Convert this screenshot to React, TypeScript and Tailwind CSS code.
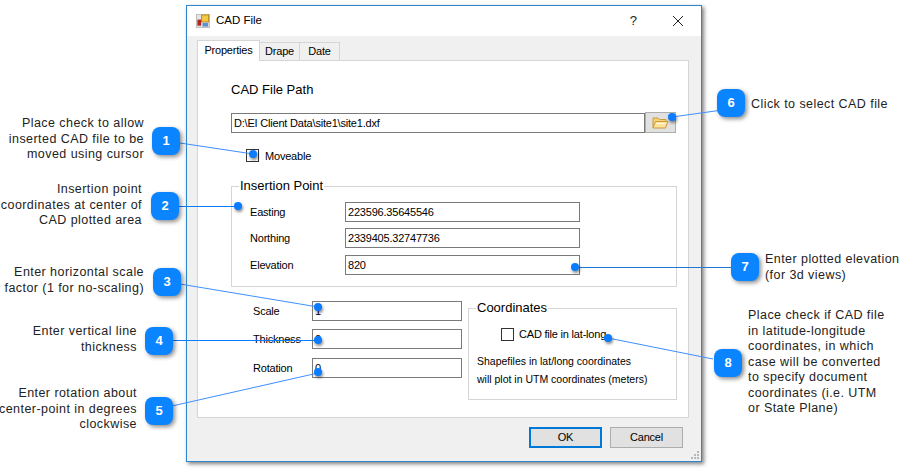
import React from "react";

const Field = ({ value, className = "" }: { value: string; className?: string }) => (
  <div className={`h-[20px] border border-[#7a7a7a] bg-white pl-[2px] text-[11px] leading-[18px] tracking-[-0.2px] text-black ${className}`}>
    {value}
  </div>
);

const Row = ({ label, value, labelWidth, inputWidth, className = "" }: { label: string; value: string; labelWidth: string; inputWidth: string; className?: string }) => (
  <div className={`flex items-center ${className}`}>
    <span className={`text-[11px] tracking-[-0.2px] text-black ${labelWidth}`}>{label}</span>
    <Field value={value} className={inputWidth} />
  </div>
);

const Badge = ({ n, className }: { n: number; className: string }) => (
  <div className={`absolute flex h-[28px] w-[28px] items-center justify-center rounded-[8px] bg-[#0a84ff] text-[13px] font-bold text-white shadow-[2px_2px_4px_rgba(0,0,0,0.45)] ${className}`}>
    {n}
  </div>
);

const Note = ({ className, children }: { className: string; children: React.ReactNode }) => (
  <div className={`absolute whitespace-nowrap text-[12.5px] leading-[15.5px] tracking-[0.44px] text-[#222] ${className}`}>{children}</div>
);

const Dot = ({ className }: { className: string }) => (
  <div className={`absolute h-[8px] w-[8px] rounded-full bg-[#0a7cff] shadow-[1px_2px_3px_rgba(0,0,0,0.45)] ${className}`} />
);

export default function App() {
  return (
    <div className="relative h-[470px] w-[899px] overflow-hidden bg-white font-['Liberation_Sans',sans-serif]">
      {/* dialog */}
      <div className="absolute left-[186px] top-[5px] flex h-[457px] w-[516px] flex-col border border-[#2a86cf] bg-[#f0f0f0] shadow-[2px_2px_4px_rgba(0,0,0,0.5)]">
        <div className="flex h-[30px] items-center bg-white pl-[9px]">
          <svg width="14" height="14" viewBox="0 0 15 15">
            <rect x="0.5" y="0.5" width="14" height="14" fill="#e4e4e4" stroke="#bdbdbd" />
            <rect x="6" y="1" width="7.5" height="7.5" fill="#f4c842" stroke="#b98a1c" />
            <rect x="1.5" y="6" width="4" height="6.5" fill="#b3261e" />
            <rect x="7" y="9.5" width="6" height="4" fill="#5b8fd6" />
          </svg>
          <span className="ml-[6px] text-[11.5px] text-black">CAD File</span>
          <span className="ml-auto mr-[35px] text-[13px] text-[#222]">?</span>
          <svg width="12" height="12" viewBox="0 0 12 12" className="mr-[17px]">
            <path d="M1 1 L11 11 M11 1 L1 11" stroke="#222" strokeWidth="1" fill="none" />
          </svg>
        </div>

        <div className="flex flex-col pl-[10px] pt-[4px]">
          {/* tabs */}
          <div className="flex h-[20px] items-end text-[11px] tracking-[-0.2px] text-black">
            <div className="z-10 -mb-px flex h-[21px] w-[63px] items-start justify-center border border-b-0 border-[#d5d5d5] bg-white pt-[1px]">Properties</div>
            <div className="flex h-[18px] w-[40px] items-center justify-center border-r border-t border-[#d5d5d5] bg-[#f0f0f0]">Drape</div>
            <div className="flex h-[18px] w-[40px] items-center justify-center border-r border-t border-[#d5d5d5] bg-[#f0f0f0]">Date</div>
          </div>

          {/* panel */}
          <div className="flex h-[358px] w-[492px] flex-col border border-[#d5d5d5] bg-white pl-[33px]">
            <div className="mt-[21px] h-[16px] text-[13px] leading-[16px] text-black">CAD File Path</div>
            <div className="mt-[14px] flex h-[21px] items-center">
              <Field value={"D:\\EI Client Data\\site1\\site1.dxf"} className="w-[414px]" />
              <div className="flex h-[21px] w-[31px] items-center justify-center border border-[#adadad] bg-[#e1e1e1]">
                <svg width="17" height="13" viewBox="0 0 17 13">
                  <path d="M1 12 V2 H6 L7.5 3.5 H14 V5.5" fill="#f6d27a" stroke="#c99a3a" />
                  <path d="M1 12 L3.5 5.5 H16 L13.5 12 Z" fill="#fbe39e" stroke="#c99a3a" />
                  <path d="M4.5 7.5 H13" stroke="#fff6d8" />
                </svg>
              </div>
            </div>
            <div className="mt-[15px] flex h-[15px] items-center pl-[15px]">
              <div className="h-[13px] w-[13px] border border-[#333] bg-white" />
              <span className="ml-[6px] mt-[2px] text-[11px] tracking-[-0.2px] text-black">Moveable</span>
            </div>

            {/* insertion point group */}
            <div className="relative mt-[23px] flex h-[101px] w-[446px] flex-col border border-[#d5d5d5] pl-[18px] pt-[15px]">
              <span className="absolute -top-[9px] left-[7px] bg-white px-[1px] text-[13px] leading-[16px] text-black">Insertion Point</span>
              <Row label="Easting" value="223596.35645546" labelWidth="w-[95px]" inputWidth="w-[235px]" />
              <Row label="Northing" value="2339405.32747736" labelWidth="w-[95px]" inputWidth="w-[235px]" className="mt-[6px]" />
              <Row label="Elevation" value="820" labelWidth="w-[95px]" inputWidth="w-[235px]" className="mt-[7px]" />
            </div>

            <div className="mt-[14px] flex items-start">
              <div className="flex w-[231px] flex-col pl-[22px]">
                <Row label="Scale" value="1" labelWidth="w-[59px]" inputWidth="w-[150px]" />
                <Row label="Thickness" value="0" labelWidth="w-[59px]" inputWidth="w-[150px]" className="mt-[8px]" />
                <Row label="Rotation" value="0" labelWidth="w-[59px]" inputWidth="w-[150px]" className="mt-[9px]" />
              </div>
              <div className="relative ml-[6px] mt-[7px] flex h-[92px] w-[209px] flex-col border border-[#d5d5d5] pl-[8px] pt-[19px]">
                <span className="absolute -top-[9px] left-[7px] bg-white px-[1px] text-[13px] leading-[16px] text-black">Coordinates</span>
                <div className="flex h-[13px] items-center pl-[24px]">
                  <div className="h-[13px] w-[13px] border border-[#333] bg-white" />
                  <span className="ml-[5px] text-[11px] tracking-[-0.2px] text-black">CAD file in lat-long</span>
                </div>
                <div className="mt-[11px] text-[10.5px] leading-[18px] text-black">
                  <div>Shapefiles in lat/long coordinates</div>
                  <div>will plot in UTM coordinates (meters)</div>
                </div>
              </div>
            </div>
          </div>

          {/* buttons */}
          <div className="mt-[9px] flex w-[486px] justify-end gap-[8px] text-[11px] tracking-[-0.2px] text-black">
            <div className="flex h-[21px] w-[73px] items-center justify-center border-2 border-[#0078d7] bg-[#e1e1e1]">OK</div>
            <div className="flex h-[21px] w-[73px] items-center justify-center border border-[#adadad] bg-[#e1e1e1]">Cancel</div>
          </div>
        </div>

        <svg width="10" height="10" viewBox="0 0 10 10" className="absolute bottom-[1px] right-[1px]">
          <path d="M7 1h2v2H7z M4 4h2v2H4z M7 4h2v2H7z M1 7h2v2H1z M4 7h2v2H4z M7 7h2v2H7z" fill="#b8b8b8" />
        </svg>
      </div>

      {/* leader lines */}
      <svg width="899" height="470" className="pointer-events-none absolute left-0 top-0" fill="none" stroke="#3f8fff" strokeWidth="1">
        <path d="M180 143 L253 154" />
        <path d="M179 206.5 L238 206.5" stroke="#0a7cff" />
        <path d="M180 284 L318 307" />
        <path d="M172 340.5 L318 340.5" stroke="#0a7cff" />
        <path d="M172 406 L318 373" />
        <path d="M744 107 L672 117" />
        <path d="M731 267.5 L575 267.5" stroke="#1f78d1" />
        <path d="M713 359 L608 338" />
      </svg>

      <Dot className="left-[249px] top-[150px]" />
      <Dot className="left-[234px] top-[202px]" />
      <Dot className="left-[314px] top-[303px]" />
      <Dot className="left-[314px] top-[336px]" />
      <Dot className="left-[314px] top-[368px]" />
      <Dot className="left-[668px] top-[113px]" />
      <Dot className="left-[571px] top-[263px]" />
      <Dot className="left-[604px] top-[334px]" />

      <Badge n={1} className="left-[152px] top-[127px]" />
      <Badge n={2} className="left-[151px] top-[192px]" />
      <Badge n={3} className="left-[153px] top-[268px]" />
      <Badge n={4} className="left-[145px] top-[327px]" />
      <Badge n={5} className="left-[145px] top-[397px]" />
      <Badge n={6} className="left-[717px] top-[89px]" />
      <Badge n={7} className="left-[731px] top-[253px]" />
      <Badge n={8} className="left-[714px] top-[349px]" />

      <Note className="right-[755px] top-[116px] text-right">Place check to allow<br />inserted CAD file to be<br />moved using cursor</Note>
      <Note className="right-[757px] top-[182px] text-right">Insertion point<br />coordinates at center of<br />CAD plotted area</Note>
      <Note className="right-[755px] top-[265px] text-right">Enter horizontal scale<br />factor (1 for no-scaling)</Note>
      <Note className="right-[762px] top-[324px] text-right">Enter vertical line<br />thickness</Note>
      <Note className="right-[762px] top-[386px] text-right">Enter rotation about<br />center-point in degrees<br />clockwise</Note>
      <Note className="left-[751px] top-[97px]">Click to select CAD file</Note>
      <Note className="left-[765px] top-[252px]">Enter plotted elevation<br />(for 3d views)</Note>
      <Note className="left-[748px] top-[308px]">Place check if CAD file<br />in latitude-longitude<br />coordinates, in which<br />case will be converted<br />to specify document<br />coordinates (i.e. UTM<br />or State Plane)</Note>
    </div>
  );
}
